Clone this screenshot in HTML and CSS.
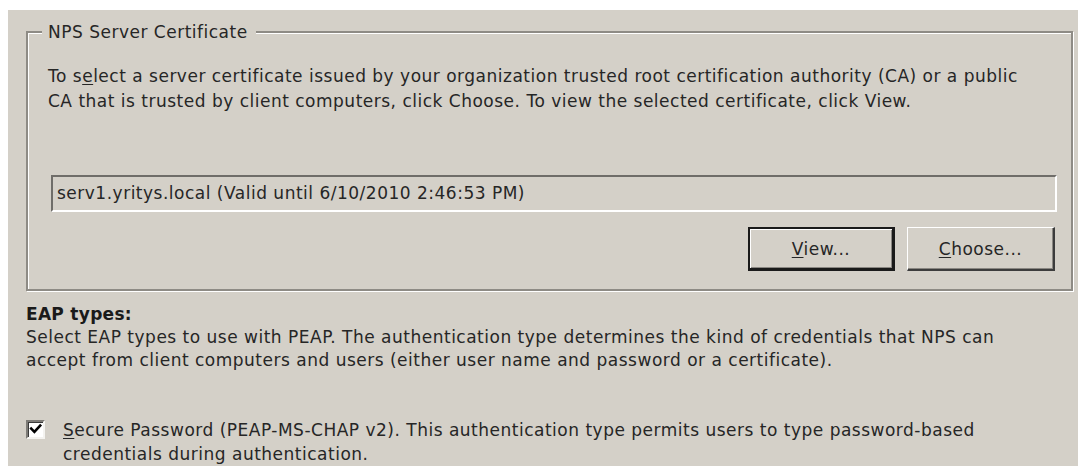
FILE: index.html
```html
<!DOCTYPE html>
<html lang="en">
<head>
<meta charset="utf-8">
<title>Edit Protected EAP Properties</title>
<link rel="stylesheet" href="styles.css">
</head>
<body>
<div class="dialog">
  <fieldset class="group">
    <legend class="group-title">NPS Server Certificate</legend>
    <p class="group-text">To s<u>e</u>lect a server certificate issued by your organization trusted root certification authority (CA) or a public<br>CA that is trusted by client computers, click Choose. To view the selected certificate, click View.</p>
    <div class="cert-field">serv1.yritys.local (Valid until 6/10/2010 2:46:53 PM)</div>
    <div class="cert-actions">
      <button class="btn btn-default" type="button"><u>V</u>iew...</button>
      <button class="btn" type="button"><u>C</u>hoose...</button>
    </div>
  </fieldset>

  <h2 class="section-title">EAP types:</h2>
  <p class="section-text">Select EAP types to use with PEAP. The authentication type determines the kind of credentials that NPS can<br>accept from client computers and users (either user name and password or a certificate).</p>

  <label class="option">
    <span class="checkbox">
      <svg viewBox="0 0 15 15" width="15" height="15" aria-hidden="true">
        <path d="M3.2 6.6 L6.4 9.9 L12.2 3.6" fill="none" stroke="#000" stroke-width="2.6" stroke-linecap="square"/>
      </svg>
    </span>
    <span class="option-text"><u>S</u>ecure Password (PEAP-MS-CHAP v2). This authentication type permits users to type password-based<br>credentials during authentication.</span>
  </label>
</div>
</body>
</html>
```

FILE: styles.css
```css
* {
  box-sizing: border-box;
}

html,
body {
  margin: 0;
  background: #ffffff;
}

body {
  font-family: "DejaVu Sans", Verdana, sans-serif;
  font-size: 17px;
  letter-spacing: 0.5px;
  color: #262626;
}

u {
  text-decoration-thickness: 1px;
  text-underline-offset: 2px;
}

/* dialog surface */
.dialog {
  margin: 10px 0 0 8px;
  height: 456px;
  padding: 0 5px 0 18px;
  background: #d4d0c8;
  overflow: hidden;
}

/* etched group box */
.group {
  margin: 12px 0 0;
  padding: 0 14px 18px 20px;
  min-inline-size: 0;
  border: 2px solid #8e8b85;
  box-shadow: inset 1px 1px 0 #ffffff, 1px 1px 0 #ffffff;
}

.group-title {
  margin-left: -6px;
  padding: 0 8px 0 6px;
  line-height: 20px;
  background: #d4d0c8;
}

.group-text {
  margin: 22px 0 0;
  line-height: 25px;
}

/* read-only certificate box */
.cert-field {
  margin: 61px 0 0 3px;
  height: 37px;
  padding: 0 4px;
  line-height: 33px;
  border: 2px solid;
  border-color: #6f6d69 #ffffff #ffffff #6f6d69;
  white-space: nowrap;
}

.cert-actions {
  display: flex;
  justify-content: flex-end;
  gap: 12px;
  margin-top: 15px;
  padding-right: 2px;
}

.btn {
  width: 148px;
  height: 44px;
  padding: 0;
  font: inherit;
  letter-spacing: inherit;
  color: inherit;
  background: #d4d0c8;
  border-style: solid;
  border-width: 1px 2px 2px 1px;
  border-color: #ffffff #3c3c3c #3c3c3c #ffffff;
  box-shadow: inset -1px -1px 0 #8a8782;
}

.btn-default {
  width: 147px;
  border-width: 2px 3px 3px 2px;
  border-color: #1a1a1a;
  box-shadow: inset 1px 1px 0 #ffffff, inset -1px -1px 0 #8a8782;
}

/* EAP section */
.section-title {
  margin: 11px 0 0;
  font-size: 17px;
  font-weight: bold;
  line-height: 24px;
  letter-spacing: 0.3px;
  color: #1a1a1a;
}

.section-text {
  margin: 0;
  line-height: 23px;
}

.option {
  display: flex;
  align-items: flex-start;
  gap: 18px;
  margin-top: 46px;
}

.checkbox {
  flex: none;
  width: 19px;
  height: 19px;
  margin-top: 2px;
  display: flex;
  align-items: center;
  justify-content: center;
  background: #ffffff;
  border: 2px solid;
  border-color: #7d7b77 #f4f3f0 #f4f3f0 #7d7b77;
  box-shadow: inset 1px 1px 0 #3a3a3a;
}

.option-text {
  line-height: 24px;
}
```
